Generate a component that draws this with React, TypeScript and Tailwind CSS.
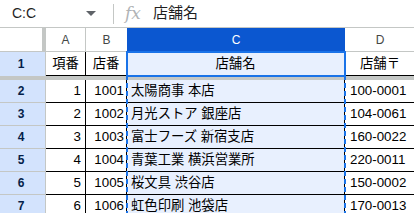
import React from "react";

const rows = [
  { n: 2, a: "1", b: "1001", c: "太陽商事 本店", d: "100-0001" },
  { n: 3, a: "2", b: "1002", c: "月光ストア 銀座店", d: "104-0061" },
  { n: 4, a: "3", b: "1003", c: "富士フーズ 新宿支店", d: "160-0022" },
  { n: 5, a: "4", b: "1004", c: "青葉工業 横浜営業所", d: "220-0011" },
  { n: 6, a: "5", b: "1005", c: "桜文具 渋谷店", d: "150-0002" },
  { n: 7, a: "6", b: "1006", c: "虹色印刷 池袋店", d: "170-0013" },
];

export default function App() {
  return (
    <div className="relative w-[414px] h-[213px] overflow-hidden bg-white font-['Liberation_Sans','Noto_Sans_CJK_JP',sans-serif] text-black">
      {/* formula bar */}
      <div className="flex items-center h-[28px] border-b border-[#c4c7c5]">
        <div className="w-[86px] pl-[12px] text-[14px] text-[#1f1f1f]">C:C</div>
        <div className="w-[20px] flex items-center">
          <svg width="10" height="6" viewBox="0 0 10 6">
            <path d="M0 0 L10 0 L5 5 Z" fill="#5f6368" />
          </svg>
        </div>
        <div className="ml-[7px] w-[1px] h-[20px] bg-[#c4c7c5]" />
        <div className="ml-[11px] w-[28px] text-[17px] italic text-[#b0b3b6] font-['DejaVu_Serif',serif] leading-none">fx</div>
        <div className="text-[15px] text-[#1f1f1f]">店舗名</div>
      </div>

      {/* column header row */}
      <div className="flex h-[24px] text-[12px] text-[#444746]">
        <div className="w-[42px] shrink-0 bg-white border-b border-[#c4c7c5]" />
        <div className="w-[4px] shrink-0 bg-[#c4c7c5]" />
        <div className="w-[40px] shrink-0 border-r border-b border-[#c4c7c5] flex items-center justify-center">A</div>
        <div className="w-[41px] shrink-0 border-b border-[#c4c7c5] flex items-center justify-center">B</div>
        <div className="w-[218px] shrink-0 bg-[#0b57d0] text-white flex items-center justify-center">C</div>
        <div className="w-[70px] shrink-0 border-b border-[#c4c7c5] flex items-center justify-center">D</div>
      </div>

      {/* row 1 (frozen) */}
      <div className="flex h-[24px] text-[13.33px]">
        <div className="w-[46px] shrink-0 bg-[#d3e3fd] border-r border-[#c4c7c5] flex items-center justify-center pr-[3px] text-[12px] font-bold text-[#041e49]">1</div>
        <div className="w-[40px] shrink-0 border-r border-b border-black flex items-center justify-center">項番</div>
        <div className="w-[41px] shrink-0 border-r border-b border-black flex items-center justify-center">店番</div>
        <div className="w-[218px] shrink-0 bg-[#e8f0fe] border-r border-b border-black flex items-center justify-center">店舗名</div>
        <div className="w-[70px] shrink-0 border-b border-black flex items-center justify-center whitespace-nowrap">店舗〒</div>
      </div>
      <div className="h-[4px] bg-[#c4c7c5]" />

      {rows.map((r) => (
        <div key={r.n} className="flex h-[23px] text-[13.33px]">
          <div className="w-[46px] shrink-0 bg-[#d3e3fd] border-r border-b border-[#c4c7c5] flex items-center justify-center pr-[3px] text-[12px] font-bold text-[#041e49]">
            {r.n}
          </div>
          <div className="w-[40px] shrink-0 border-r border-b border-black flex items-center justify-end pr-[4px]">{r.a}</div>
          <div className="w-[41px] shrink-0 border-r border-b border-black flex items-center justify-end pr-[2px]">{r.b}</div>
          <div className="w-[218px] shrink-0 bg-[#e8f0fe] border-r border-b border-black flex items-center pl-[4px] whitespace-nowrap">{r.c}</div>
          <div className="w-[70px] shrink-0 border-b border-black flex items-center pl-[5px] whitespace-nowrap">{r.d}</div>
        </div>
      ))}

      {/* copy marquee (dashed) around column C */}
      <div className="absolute left-[126px] top-[51px] w-[220px] h-[2px] bg-[repeating-linear-gradient(to_right,#1a73e8_0_5px,#8ab4f8_5px_8px)]" />
      <div className="absolute left-[126px] top-[51px] w-[2px] h-[170px] bg-[repeating-linear-gradient(to_bottom,#1a73e8_0_5px,transparent_5px_8px)]" />
      <div className="absolute left-[344px] top-[51px] w-[2px] h-[170px] bg-[repeating-linear-gradient(to_bottom,#1a73e8_0_5px,transparent_5px_8px)]" />

      {/* active cell C1 */}
      <div className="absolute left-[126px] top-[51px] w-[220px] h-[26px] border-2 border-[#1a73e8]" />
    </div>
  );
}
